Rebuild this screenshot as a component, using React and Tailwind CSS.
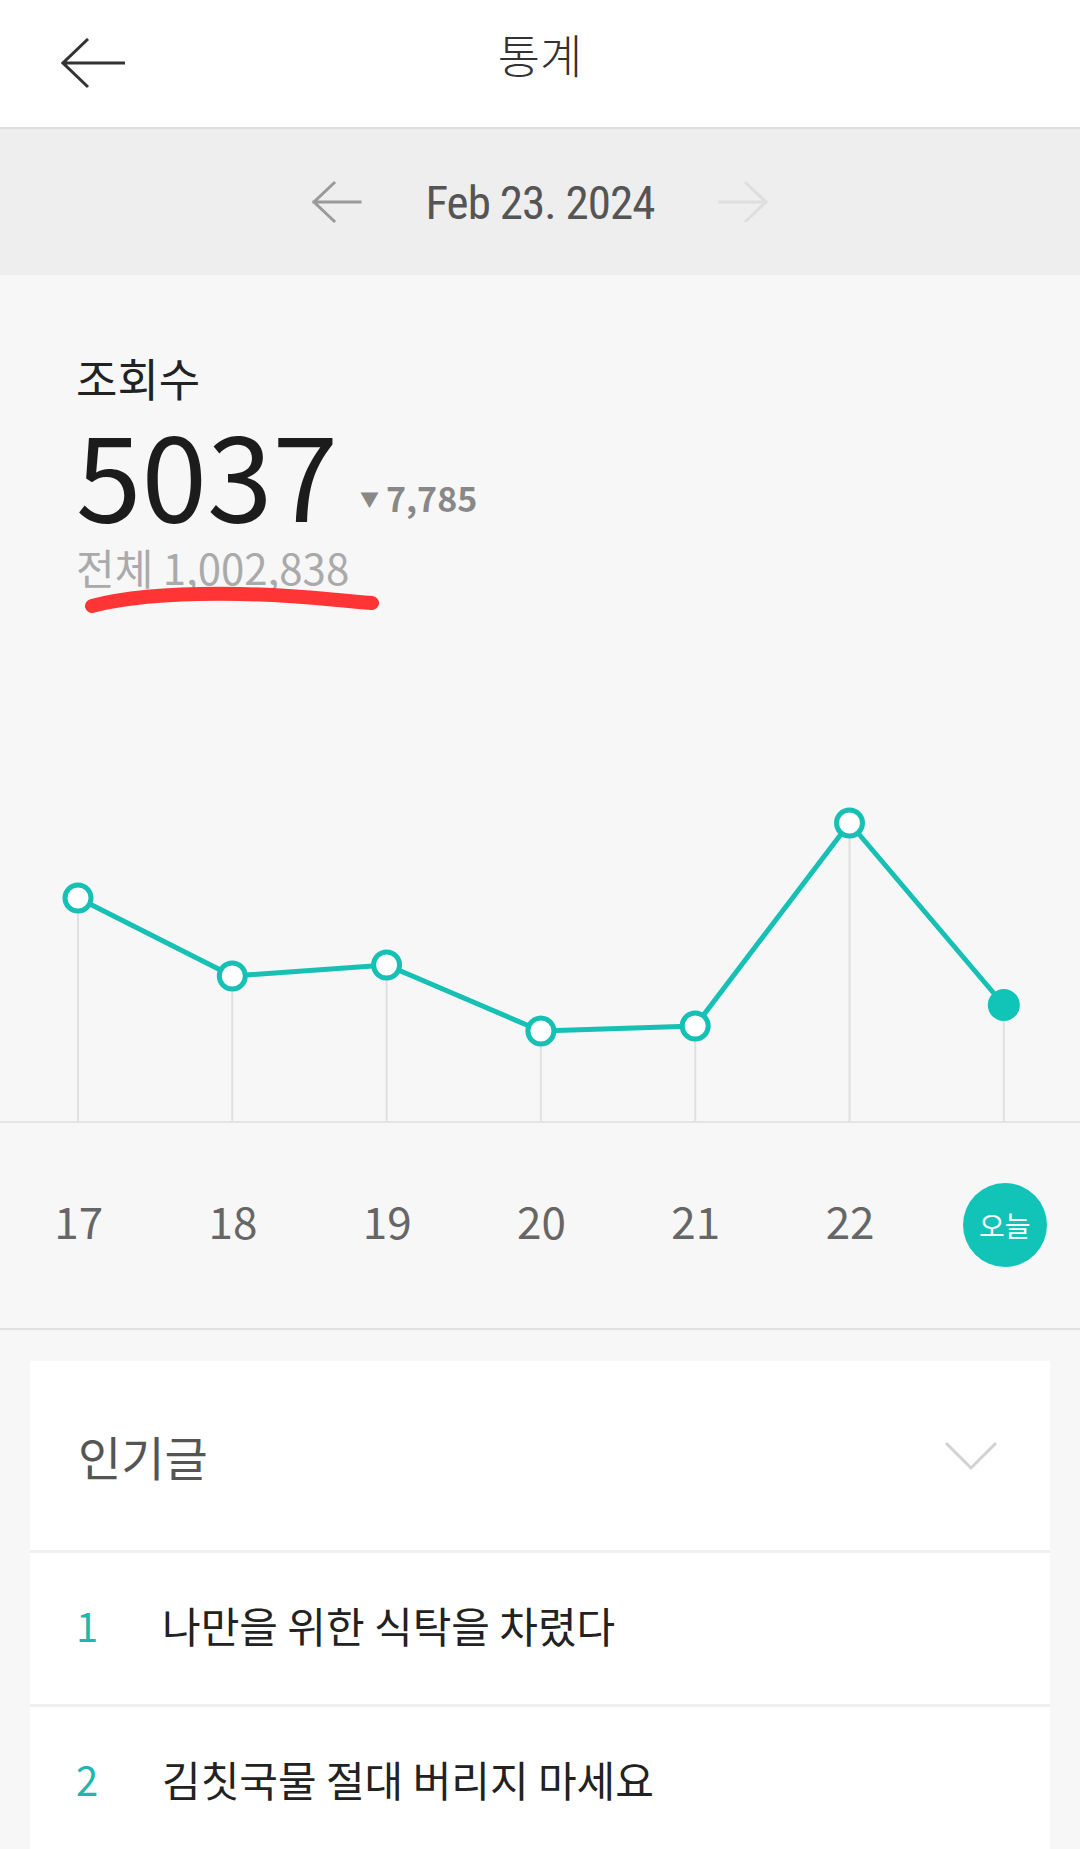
import React from "react";

const days = ["17", "18", "19", "20", "21", "22"];
// y of each day's point inside the chart box (box top = page y 780)
const views = [118, 196, 185, 251, 246, 43, 225];
const posts = ["나만을 위한 식탁을 차렸다", "김칫국물 절대 버리지 마세요"];

const colX = (i) => 78 + i * 154.3;

const ArrowLeft = ({ color, width = 3 }) => (
  <svg width="50" height="44" viewBox="0 0 50 44" fill="none">
    <path
      d="M48 22H2M22 3L2 22l20 19"
      stroke={color}
      strokeWidth={width}
      strokeLinecap="square"
    />
  </svg>
);

const Chart = () => {
  const pts = views.map((y, i) => [colX(i), y]);
  return (
    <svg width="1080" height="345" viewBox="0 0 1080 345" className="block">
      {pts.map(([x, y], i) => (
        <line key={i} x1={x} x2={x} y1={y} y2={342} stroke="#e0e0e0" strokeWidth="2" />
      ))}
      <line x1="0" x2="1080" y1="342" y2="342" stroke="#e4e4e4" strokeWidth="2" />
      <polyline
        points={pts.map((p) => p.join(",")).join(" ")}
        fill="none"
        stroke="#17c0b4"
        strokeWidth="5"
        strokeLinejoin="round"
      />
      {pts.map(([x, y], i) =>
        i === pts.length - 1 ? (
          <circle key={i} cx={x} cy={y} r="16" fill="#10c4b8" />
        ) : (
          <circle key={i} cx={x} cy={y} r="13" fill="#fff" stroke="#17c0b4" strokeWidth="5" />
        )
      )}
    </svg>
  );
};

const App = () => {
  return (
    <div className="min-h-screen w-full bg-[#f7f7f7] font-['Noto_Sans_CJK_KR','Noto_Sans',sans-serif]">
      {/* header */}
      <div className="grid h-[129px] grid-cols-[1fr_auto_1fr] items-center border-b-2 border-[#dddddd] bg-white">
        <div className="pl-[61px]">
          <svg width="66" height="52" viewBox="0 0 66 52" fill="none">
            <path d="M64 25H2M27 1L2 25l25 24" stroke="#333" strokeWidth="3" />
          </svg>
        </div>
        <h1 className="mb-[22px] text-[46px] font-light leading-none text-[#333]">통계</h1>
        <div />
      </div>

      {/* date bar */}
      <div className="flex h-[146px] items-center justify-center bg-[#eeeeee]">
        <ArrowLeft color="#9a9a9a" />
        <span className="mx-[63px] font-['Liberation_Sans_Narrow','Roboto_Condensed',Roboto,sans-serif] text-[47px] leading-none tracking-[-0.02em] text-[#555]">
          Feb 23. 2024
        </span>
        <div className="rotate-180">
          <ArrowLeft color="#dedede" />
        </div>
      </div>

      {/* stats */}
      <div className="border-b-2 border-[#e0e0e0]">
        <div className="relative h-[505px] pl-[76px] pt-[80px]">
          <div className="text-[45px] leading-none text-[#222]">조회수</div>
          <div className="mt-[12px] flex items-end">
            <span className="text-[118px] leading-none text-[#1c1c1c]">5037</span>
            <span className="mb-[15px] ml-[22px] flex items-center gap-[7px] text-[34px] font-semibold leading-none text-[#888]">
              <span className="text-[19px]">▼</span>
              7,785
            </span>
          </div>
          <div className="mt-[16px] text-[42px] leading-none text-[#aaa]">
            전체 1,002,838
          </div>
          <svg
            className="absolute left-0 top-0"
            width="1080"
            height="505"
            viewBox="0 0 1080 505"
            fill="none"
          >
            <path
              d="M92 331C130 321 180 318 240 319S330 325 372 328"
              stroke="#ff3535"
              strokeWidth="14"
              strokeLinecap="round"
            />
          </svg>
        </div>

        <Chart />

        <div className="grid h-[203px] grid-cols-7 items-center pb-[14px]">
          {days.map((d) => (
            <div key={d} className="flex justify-center pl-[3px] text-[44px] leading-none text-[#666]">
              {d}
            </div>
          ))}
          <div className="flex justify-center pl-[4px] pt-[10px]">
            <span className="flex h-[84px] w-[84px] items-center justify-center rounded-full bg-[#12c3b7] text-[28px] text-white">
              오늘
            </span>
          </div>
        </div>
      </div>

      {/* popular posts */}
      <div className="px-[30px] pt-[31px]">
        <div className="bg-white">
          <div className="flex h-[189px] items-center justify-between pl-[48px] pr-[51px]">
            <span className="text-[47px] leading-none text-[#555]">인기글</span>
            <svg width="56" height="32" viewBox="0 0 56 32" fill="none">
              <path d="M3 3l25 25L53 3" stroke="#d2d2d2" strokeWidth="3" />
            </svg>
          </div>
          {posts.map((title, i) => (
            <div
              key={title}
              className="flex h-[154px] items-center border-t-[3px] border-[#efefef] pb-[8px] pl-[46px]"
            >
              <span className="w-[86px] text-[40px] leading-none text-[#1fb6ad]">
                {i + 1}
              </span>
              <span className="text-[42px] leading-none text-[#222]">{title}</span>
            </div>
          ))}
        </div>
      </div>
    </div>
  );
};

export default App;
